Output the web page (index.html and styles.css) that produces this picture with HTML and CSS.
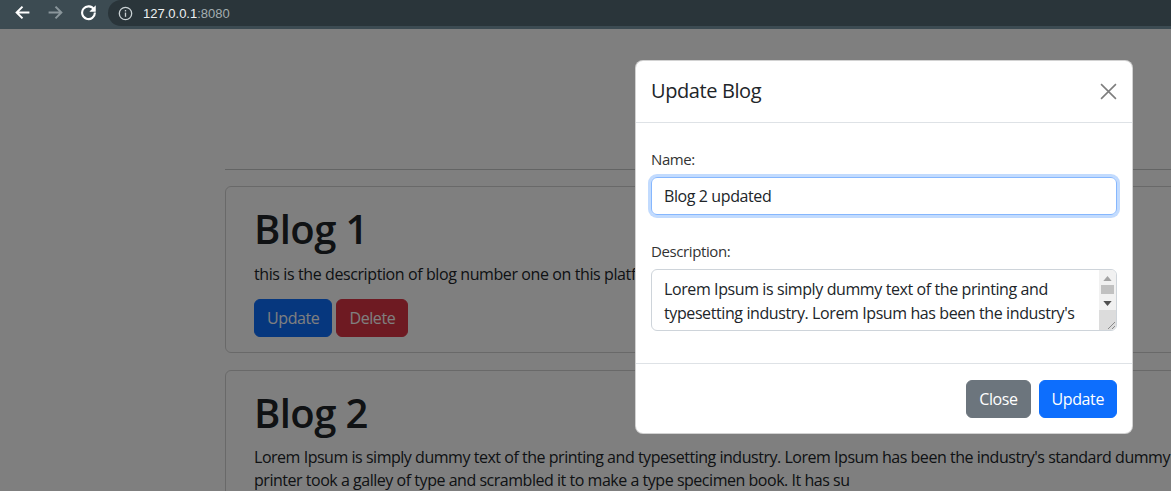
FILE: index.html
```html
<!DOCTYPE html>
<html lang="en">
<head>
<meta charset="utf-8">
<title>Blogs</title>
<link rel="stylesheet" href="styles.css">
</head>
<body>
<header class="chrome">
  <div class="nav-icons">
    <svg class="nav-icon" viewBox="0 0 16 16" width="17" height="17"><path d="M14.5 8H2.5M8 2.5L2.5 8 8 13.5" fill="none" stroke="#fff" stroke-width="1.9"/></svg>
    <svg class="nav-icon" viewBox="0 0 16 16" width="17" height="17"><path d="M1.5 8h12M8 2.5L13.5 8 8 13.5" fill="none" stroke="#8a969b" stroke-width="1.9"/></svg>
    <svg class="nav-icon" viewBox="0 0 16 16" width="17" height="17"><path d="M13.2 5.2A6 6 0 1 0 14 8" fill="none" stroke="#fff" stroke-width="2"/><path d="M14.8 1.2v6H8.8z" fill="#fff"/></svg>
  </div>
  <div class="omnibox">
    <svg class="info" viewBox="0 0 16 16" width="15" height="15"><circle cx="8" cy="8" r="6.6" fill="none" stroke="#c9d0d3" stroke-width="1.4"/><rect x="7.3" y="7" width="1.4" height="4.5" fill="#c9d0d3"/><rect x="7.3" y="4.3" width="1.4" height="1.5" fill="#c9d0d3"/></svg>
    <span class="host">127.0.0.1</span><span class="port">:8080</span>
  </div>
</header>

<div class="viewport">
  <main class="page">
    <hr class="divider">
    <section class="card">
      <h1 class="card-title">Blog 1</h1>
      <p class="card-text">this is the description of blog number one on this platform</p>
      <div class="actions">
        <button class="btn btn-primary">Update</button>
        <button class="btn btn-danger">Delete</button>
      </div>
    </section>
    <section class="card">
      <h1 class="card-title">Blog 2</h1>
      <p class="card-text"><span class="line">Lorem Ipsum is simply dummy text of the printing and typesetting industry. Lorem Ipsum has been the industry's standard dummy text ever since the 1500s, when an unknown</span><span class="line">printer took a galley of type and scrambled it to make a type specimen book. It has su</span></p>
      <div class="actions">
        <button class="btn btn-primary">Update</button>
        <button class="btn btn-danger">Delete</button>
      </div>
    </section>
  </main>
  <div class="backdrop"></div>
  <div class="modal">
    <div class="modal-header">
      <h5 class="modal-title">Update Blog</h5>
      <button class="btn-close" aria-label="Close"><svg viewBox="0 0 16 16" width="17" height="17"><path d="M1 1l14 14M15 1L1 15" stroke="#000" stroke-width="1.5" fill="none"/></svg></button>
    </div>
    <div class="modal-body">
      <div class="field">
        <label class="form-label">Name:</label>
        <div class="form-control focused">Blog 2 updated</div>
      </div>
      <div class="field last">
        <label class="form-label">Description:</label>
        <div class="textarea">
          <div class="textarea-text">Lorem Ipsum is simply dummy text of the printing and typesetting industry. Lorem Ipsum has been the industry's</div>
          <div class="scrollbar">
            <div class="sb-track">
              <svg class="sb-arrow" viewBox="0 0 10 6" width="9" height="5"><path d="M5 0l5 6H0z" fill="#a3a3a3"/></svg>
              <div class="sb-thumb"></div>
              <div class="sb-fill"></div>
              <svg class="sb-arrow" viewBox="0 0 10 6" width="9" height="5"><path d="M0 0h10L5 6z" fill="#505050"/></svg>
            </div>
            <div class="sb-corner"><svg viewBox="0 0 12 12" width="12" height="12"><path d="M11 4L4 11M11 8L8 11" stroke="#8a8a8a" stroke-width="1"/></svg></div>
          </div>
        </div>
      </div>
    </div>
    <div class="modal-footer">
      <button class="btn btn-secondary">Close</button>
      <button class="btn btn-primary">Update</button>
    </div>
  </div>
</div>
</body>
</html>
```

FILE: styles.css
```css
* { box-sizing: border-box; }
html, body { margin: 0; padding: 0; }
body {
  width: 1171px;
  height: 491px;
  overflow: hidden;
  font-family: "Open Sans", "Noto Sans", sans-serif;
  letter-spacing: -0.4px;
  color: #212529;
  background: #fff;
}

/* Browser chrome */
.chrome {
  height: 29px;
  background: #3c4b52;
  display: flex;
  align-items: flex-start;
  letter-spacing: 0;
}
.nav-icons {
  display: flex;
  align-items: center;
  gap: 16px;
  padding-left: 14px;
  width: 108px;
  height: 25px;
}
.nav-icon { display: block; }
.omnibox {
  flex: 1;
  height: 26px;
  background: #2a353a;
  border-radius: 0 0 0 14px;
  border-top-left-radius: 14px;
  display: flex;
  align-items: center;
  padding-left: 10px;
  font-size: 13px;
  font-family: "Liberation Sans", Arial, sans-serif;
}
.info { margin-right: 10px; }
.host { color: #eef1f2; }
.port { color: #a3adb1; }

/* Page */
.viewport {
  position: relative;
  height: 462px;
  overflow: hidden;
}
.page {
  width: 1560px;
  padding: 140px 0 0 225px;
}
.divider {
  margin: 0 0 16px 0;
  border: 0;
  border-top: 1px solid rgba(33, 37, 41, 0.25);
}
.card {
  border: 1px solid rgba(0, 0, 0, 0.175);
  border-radius: 6px;
  padding: 18px 28px 15px;
  margin-bottom: 17px;
}
.card-title {
  margin: 0 0 9px;
  font-size: 40px;
  font-weight: 600;
  line-height: 1.2;
  letter-spacing: -0.6px;
}
.card-text {
  margin: 0 0 13px;
  font-size: 16px;
  line-height: 24px;
}
.line { display: block; white-space: nowrap; line-height: 23px; letter-spacing: -0.47px; }
.actions { display: flex; gap: 4px; }
.btn {
  font-family: inherit;
  letter-spacing: -0.4px;
  font-size: 16px;
  line-height: 24px;
  padding: 6px 12px;
  border: 1px solid transparent;
  border-radius: 6px;
  color: #fff;
  cursor: pointer;
}
.btn-primary { background: #0d6efd; border-color: #0d6efd; }
.btn-danger { background: #dc3545; border-color: #dc3545; }
.btn-secondary { background: #6c757d; border-color: #6c757d; }

.backdrop {
  position: absolute;
  inset: 0;
  background: rgba(0, 0, 0, 0.5);
}

/* Modal */
.modal {
  position: absolute;
  left: 635px;
  top: 31px;
  width: 498px;
  background: #fff;
  border: 1px solid rgba(0, 0, 0, 0.175);
  border-radius: 8px;
}
.modal-header {
  display: flex;
  align-items: center;
  justify-content: space-between;
  padding: 15px 15px 16px 15px;
  border-bottom: 1px solid #dee2e6;
}
.modal-title {
  margin: 0;
  font-size: 20px;
  font-weight: 500;
  line-height: 30px;
}
.btn-close {
  background: none;
  border: 0;
  padding: 0;
  opacity: 0.5;
  display: flex;
  cursor: pointer;
}
.modal-body {
  padding: 24px 15px 16px;
  border-bottom: 1px solid #dee2e6;
}
.field { margin-bottom: 24px; }
.field.last { margin-bottom: 16px; }
.form-label {
  display: block;
  margin-bottom: 6px;
  font-size: 15px;
  line-height: 24px;
  color: #333;
}
.form-control {
  height: 38px;
  padding: 6px 12px;
  font-size: 16px;
  line-height: 24px;
  border: 1px solid #dee2e6;
  border-radius: 6px;
}
.form-control.focused {
  border-color: #86b7fe;
  box-shadow: 0 0 0 3px rgba(13, 110, 253, 0.25);
}
.textarea {
  display: flex;
  height: 62px;
  border: 1px solid #ced4da;
  border-radius: 6px;
  overflow: hidden;
}
.textarea-text {
  flex: 1;
  padding: 7px 12px;
  font-size: 16px;
  line-height: 24px;
}
.scrollbar {
  width: 17px;
  display: flex;
  flex-direction: column;
  background: #f1f1f1;
}
.sb-track {
  flex: 1;
  display: flex;
  flex-direction: column;
  align-items: center;
  padding-top: 6px;
}
.sb-arrow { display: block; }
.sb-thumb {
  width: 13px;
  height: 9px;
  margin-top: 4px;
  background: #c1c1c1;
}
.sb-fill { flex: 1; }
.sb-track .sb-arrow:last-child { margin-bottom: 4px; }
.sb-corner {
  height: 20px;
  background: #dcdcdc;
  display: flex;
  align-items: flex-end;
  justify-content: flex-end;
}
.sb-corner svg { display: block; }
.modal-footer {
  display: flex;
  justify-content: flex-end;
  gap: 8px;
  padding: 16px 15px 15px;
}
```
